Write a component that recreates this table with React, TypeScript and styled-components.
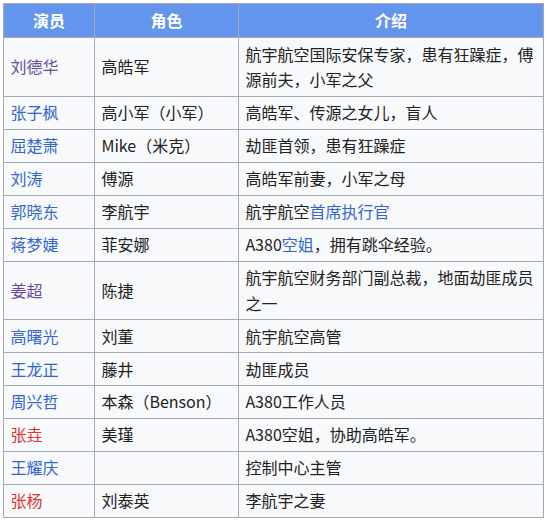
import React from "react";
import styled, { createGlobalStyle } from "styled-components";

const Global = createGlobalStyle`
  html, body { margin: 0; padding: 0; background: #ffffff; }
  body { font-family: "Noto Sans CJK SC", "Noto Sans", sans-serif; color: #202122; }
`;

const Wrap = styled.div`
  padding: 3px;
`;

const Table = styled.table`
  border-collapse: collapse;
  table-layout: fixed;
  width: 540px;
  background: #f8f9fa;
  border: 1px solid #a2a9b1;
  font-size: 16px;
  line-height: 1.6;
  color: #202122;
`;

const Head = styled.th`
  background: #6495ed;
  color: #ffffff;
  font-weight: bold;
  text-align: center;
  border: 1px solid #a2a9b1;
  padding: 3.2px 6.4px;
  height: 27px;
`;

const Cell = styled.td`
  border: 1px solid #a2a9b1;
  padding: 3.2px 6.4px;
  vertical-align: middle;
  text-align: left;
`;

type Tone = "link" | "visited" | "red";

const Link = styled.a<{ $tone: Tone }>`
  text-decoration: none;
  color: ${(p) =>
    p.$tone === "red" ? "#d33" : p.$tone === "visited" ? "#6b4ba1" : "#3366cc"};
`;

type Row = {
  actor: string;
  tone: Tone;
  role: string;
  desc: React.ReactNode;
};

const rows: Row[] = [
  { actor: "刘德华", tone: "visited", role: "高皓军", desc: "航宇航空国际安保专家，患有狂躁症，傅源前夫，小军之父" },
  { actor: "张子枫", tone: "link", role: "高小军（小军）", desc: "高皓军、传源之女儿，盲人" },
  { actor: "屈楚萧", tone: "link", role: "Mike（米克）", desc: "劫匪首领，患有狂躁症" },
  { actor: "刘涛", tone: "link", role: "傅源", desc: "高皓军前妻，小军之母" },
  {
    actor: "郭晓东",
    tone: "link",
    role: "李航宇",
    desc: (
      <>
        航宇航空<Link $tone="link">首席执行官</Link>
      </>
    ),
  },
  {
    actor: "蒋梦婕",
    tone: "link",
    role: "菲安娜",
    desc: (
      <>
        A380<Link $tone="link">空姐</Link>，拥有跳伞经验。
      </>
    ),
  },
  { actor: "姜超", tone: "visited", role: "陈捷", desc: "航宇航空财务部门副总裁，地面劫匪成员之一" },
  { actor: "高曙光", tone: "link", role: "刘董", desc: "航宇航空高管" },
  { actor: "王龙正", tone: "link", role: "藤井", desc: "劫匪成员" },
  { actor: "周兴哲", tone: "link", role: "本森（Benson）", desc: "A380工作人员" },
  { actor: "张垚", tone: "red", role: "美瑾", desc: "A380空姐，协助高皓军。" },
  { actor: "王耀庆", tone: "link", role: "", desc: "控制中心主管" },
  { actor: "张杨", tone: "red", role: "刘泰英", desc: "李航宇之妻" },
];

export default function App() {
  return (
    <Wrap>
      <Global />
      <Table>
        <colgroup>
          <col style={{ width: 91 }} />
          <col style={{ width: 144 }} />
          <col style={{ width: 305 }} />
        </colgroup>
        <thead>
          <tr>
            <Head>演员</Head>
            <Head>角色</Head>
            <Head>介绍</Head>
          </tr>
        </thead>
        <tbody>
          {rows.map((r) => (
            <tr key={r.actor}>
              <Cell>
                <Link $tone={r.tone}>{r.actor}</Link>
              </Cell>
              <Cell>{r.role}</Cell>
              <Cell>{r.desc}</Cell>
            </tr>
          ))}
        </tbody>
      </Table>
    </Wrap>
  );
}
